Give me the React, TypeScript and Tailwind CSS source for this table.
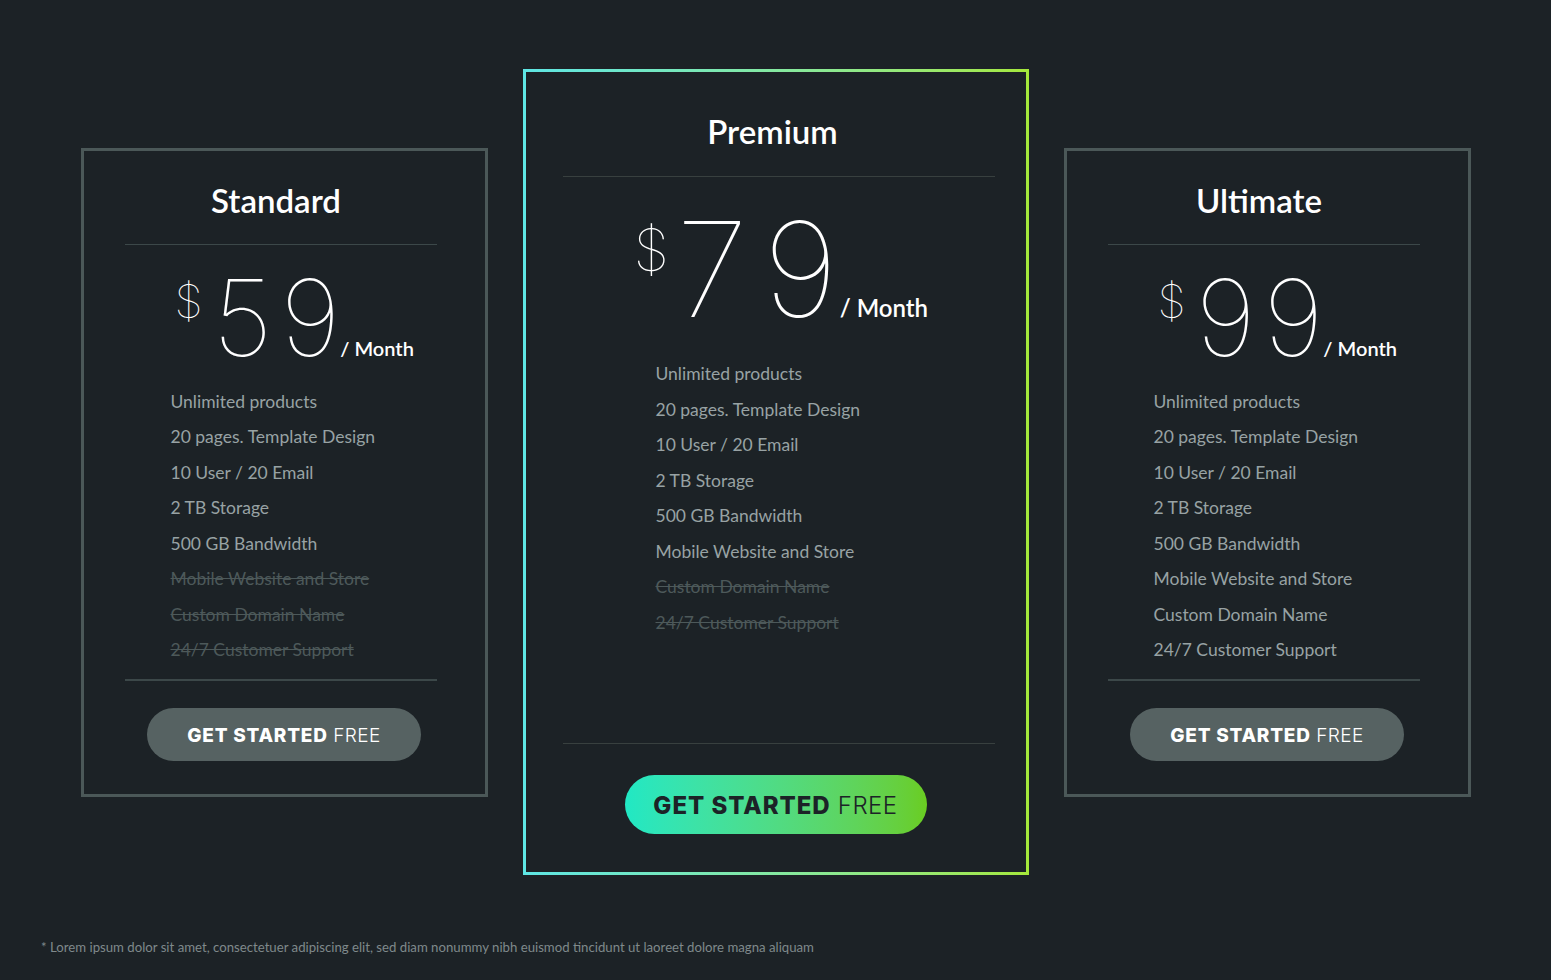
import React from "react";

type Feature = { label: string; off?: boolean };

const FEATURES = [
  "Unlimited products",
  "20 pages. Template Design",
  "10 User / 20 Email",
  "2 TB Storage",
  "500 GB Bandwidth",
  "Mobile Website and Store",
  "Custom Domain Name",
  "24/7 Customer Support",
];

function featuresFor(activeCount: number): Feature[] {
  return FEATURES.map((label, i) => ({ label, off: i >= activeCount }));
}

function FeatureList({ items, className }: { items: Feature[]; className: string }) {
  return (
    <ul className={className}>
      {items.map((f) => (
        <li
          key={f.label}
          className={`text-[17.5px] leading-[35.5px] ${
            f.off ? "text-[#4d595a] line-through decoration-[#4d595a]" : "text-[#98a2a4]"
          }`}
        >
          {f.label}
        </li>
      ))}
    </ul>
  );
}

function Price({ amount, big }: { amount: string; big?: boolean }) {
  return (
    <div className={`flex items-start text-white ${big ? "mt-[26px] pl-[108px]" : "mt-[20px] pl-[91px]"}`}>
      <span
        className={`font-['Inter',sans-serif] font-thin leading-none ${
          big ? "mt-[18px] mr-[7px] text-[58px]" : "mt-[13px] mr-[10px] text-[46px]"
        }`}
      >
        $
      </span>
      <div className={`flex items-baseline ${big ? "gap-[15px]" : "gap-[8px]"}`}>
        {amount.split("").map((d, i) => (
          <span
            key={i}
            className={`font-['Inter',sans-serif] font-thin leading-none ${big ? "text-[132px]" : "text-[106px]"}`}
          >
            {d}
          </span>
        ))}
        <span className={`font-semibold ${big ? "-ml-[13px] text-[24px]" : "-ml-[8px] text-[20px]"}`}>/ Month</span>
      </div>
    </div>
  );
}

function CtaButton({ premium }: { premium?: boolean }) {
  return (
    <button
      className={`mx-auto flex items-center justify-center rounded-full font-['Inter',sans-serif] ${
        premium
          ? "mt-[31px] h-[59px] w-[302px] bg-linear-to-r from-[#20e8c4] to-[#6acd20] pt-[3px] text-[24px] text-[#1c2327]"
          : "mt-[27px] h-[53px] w-[274px] bg-[#566262] pt-[5px] text-[19px] text-white"
      }`}
    >
      <span className="font-extrabold tracking-[0.04em]">GET STARTED</span>
      <span className="ml-[0.3em] font-light tracking-[0.02em]">FREE</span>
    </button>
  );
}

function SideCard({ title, amount, active }: { title: string; amount: string; active: number }) {
  return (
    <div className="flex h-[649px] w-[407px] flex-col border-[3px] border-[#4b5858]">
      <h2 className="pt-[29px] pr-[16px] text-center text-[33px] leading-[40px] font-semibold text-white">
        {title}
      </h2>
      <div className="mx-[41px] mt-[24px] h-px w-[312px] bg-[#3c4849]" />
      <Price amount={amount} />
      <FeatureList items={featuresFor(active)} className="mt-[13px] pl-[87px]" />
      <div className="mt-auto pb-[33px]">
        <div className="mx-[41px] h-[2px] w-[312px] bg-[#3c4849]" />
        <CtaButton />
      </div>
    </div>
  );
}

function PremiumCard() {
  return (
    <div className="h-[806px] w-[506px] bg-linear-to-r from-[#5ee6e4] to-[#a5e83a] p-[3px]">
      <div className="flex h-full flex-col bg-[#1c2226]">
        <h2 className="pt-[39px] pr-[6px] text-center text-[33px] leading-[40px] font-semibold text-white">
          Premium
        </h2>
        <div className="mx-[37px] mt-[25px] h-px w-[432px] bg-[#38403f]" />
        <Price amount="79" big />
        <FeatureList items={featuresFor(6)} className="mt-[21px] pl-[130px]" />
        <div className="mt-auto pb-[38px]">
          <div className="mx-[37px] h-px w-[432px] bg-[#38403f]" />
          <CtaButton premium />
        </div>
      </div>
    </div>
  );
}

export default function App() {
  return (
    <div className="flex h-[980px] w-full flex-col bg-[#1c2226] font-['Lato',sans-serif]">
      <div className="flex items-center justify-center gap-[35px] pt-[69px]">
        <SideCard title="Standard" amount="59" active={5} />
        <PremiumCard />
        <SideCard title="Ultimate" amount="99" active={8} />
      </div>
      <p className="mt-[64px] pl-[41px] text-[13.2px] leading-[16px] text-[#7f898b]">
        * Lorem ipsum dolor sit amet, consectetuer adipiscing elit, sed diam nonummy nibh euismod tincidunt ut laoreet
        dolore magna aliquam
      </p>
    </div>
  );
}
